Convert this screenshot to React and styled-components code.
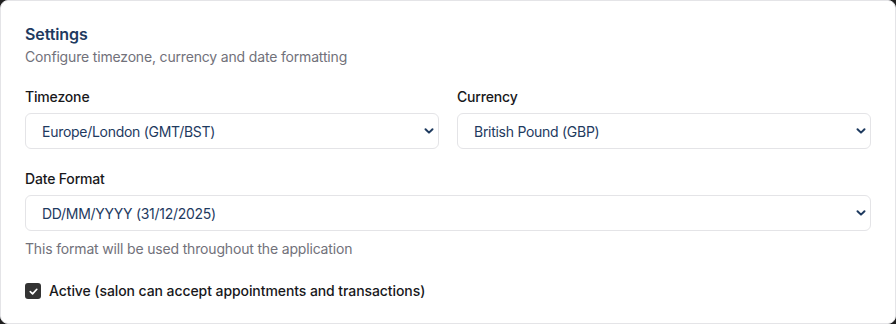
import React from 'react';
import styled, { createGlobalStyle } from 'styled-components';

const Global = createGlobalStyle`
  html, body {
    margin: 0;
    padding: 0;
    background: #1f1f1f;
  }
  * { box-sizing: border-box; }
`;

const Card = styled.div`
  width: 896px;
  height: 324px;
  background: #ffffff;
  border: 1px solid #e4e4e7;
  border-radius: 8px;
  padding: 21px 24px 0 24px;
  font-family: Inter, "Liberation Sans", sans-serif;
  color: #18181b;
  letter-spacing: -0.17px;
`;

const Title = styled.h2`
  margin: 0;
  font-size: 16px;
  line-height: 24px;
  font-weight: 600;
  color: #1e3a5f;
  letter-spacing: -0.1px;
`;

const Subtitle = styled.p`
  margin: 1px 0 0 0;
  font-size: 14px;
  line-height: 20px;
  color: #71717a;
`;

const Grid = styled.div`
  display: grid;
  grid-template-columns: 1fr 1fr;
  column-gap: 18px;
  margin-top: 20px;
`;

const Field = styled.div`
  display: flex;
  flex-direction: column;
  gap: 6px;
  margin-top: ${p => p.$top || 0}px;
`;

const Label = styled.label`
  font-size: 14px;
  line-height: 20px;
  font-weight: 500;
  color: #18181b;
`;

const SelectWrap = styled.div`
  position: relative;
  height: 36px;
  border: 1px solid #e4e4e7;
  border-radius: 6px;
  background: #fff;
  display: flex;
  align-items: center;
  padding: 0 16px;
  font-size: 14px;
  letter-spacing: -0.28px;
  color: #1e3a5f;
`;

const Chevron = styled.svg`
  position: absolute;
  right: 4px;
  top: 50%;
  margin-top: -5px;
`;

const Help = styled.p`
  margin: 8px 0 0 0;
  font-size: 14px;
  line-height: 20px;
  color: #71717a;
`;

const CheckRow = styled.label`
  display: flex;
  align-items: center;
  gap: 8px;
  margin-top: 22px;
  font-size: 14px;
  line-height: 20px;
  font-weight: 500;
  letter-spacing: -0.08px;
  color: #18181b;
`;

const Box = styled.span`
  width: 16px;
  height: 16px;
  border-radius: 3px;
  background: #333333;
  display: inline-flex;
  align-items: center;
  justify-content: center;
`;

function Select({ value }) {
  return (
    <SelectWrap>
      {value}
      <Chevron width="10" height="10" viewBox="0 0 10 10">
        <path d="M1.5 3.2 L5 6.6 L8.5 3.2" fill="none" stroke="#1e3a5f" strokeWidth="2" strokeLinecap="round" strokeLinejoin="round" />
      </Chevron>
    </SelectWrap>
  );
}

export default function App() {
  return (
    <>
      <Global />
      <Card>
        <Title>Settings</Title>
        <Subtitle>Configure timezone, currency and date formatting</Subtitle>
        <Grid>
          <Field>
            <Label>Timezone</Label>
            <Select value="Europe/London (GMT/BST)" />
          </Field>
          <Field>
            <Label>Currency</Label>
            <Select value="British Pound (GBP)" />
          </Field>
        </Grid>
        <Field $top={20}>
          <Label>Date Format</Label>
          <Select value="DD/MM/YYYY (31/12/2025)" />
        </Field>
        <Help>This format will be used throughout the application</Help>
        <CheckRow>
          <Box>
            <svg width="11" height="11" viewBox="0 0 12 12">
              <path d="M2.5 6.2 L5 8.6 L9.6 3.6" fill="none" stroke="#fff" strokeWidth="1.8" strokeLinecap="round" strokeLinejoin="round" />
            </svg>
          </Box>
          Active (salon can accept appointments and transactions)
        </CheckRow>
      </Card>
    </>
  );
}
